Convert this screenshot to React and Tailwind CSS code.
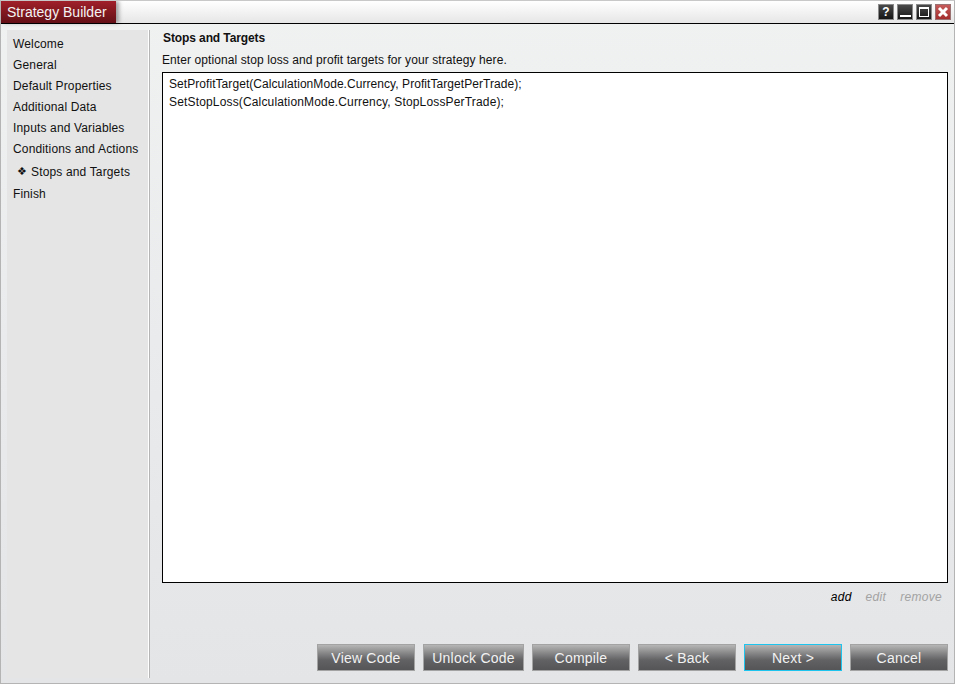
import React from "react";

const NAV = [
  { label: "Welcome", h: "h-[21px]" },
  { label: "General", h: "h-[21px]" },
  { label: "Default Properties", h: "h-[21px]" },
  { label: "Additional Data", h: "h-[21px]" },
  { label: "Inputs and Variables", h: "h-[21px]" },
  { label: "Conditions and Actions", h: "h-[22px]" },
  { label: "Stops and Targets", h: "h-[23px]", active: true },
  { label: "Finish", h: "h-[21px]" },
];

const WinButton = ({ children, className = "" }) => (
  <div
    className={`w-[16px] h-[16px] border border-[#8a8a8a] flex items-center justify-center ${className}`}
  >
    {children}
  </div>
);

const ActionButton = ({ label, width = "w-[98px]", focused }) => (
  <button
    type="button"
    className={`${width} h-[27px] border bg-gradient-to-b from-[#b6b6b6] via-[#626264] via-[60%] to-[#555557] text-[14px] tracking-[0.2px] text-[#f2f2f2] flex items-center justify-center pt-[2px] ${
      focused ? "border-[#1cc4ee]" : "border-[#a3a3a3]"
    }`}
  >
    {label}
  </button>
);

export default function App() {
  return (
    <div className="w-[955px] h-[684px] flex flex-col border border-[#b4b4b4] border-t-[#c8c8c8] bg-gradient-to-b from-[#f0f1f1] to-[#e4e5e7] font-['Liberation_Sans',Arial,sans-serif] text-[12px] text-[#111] overflow-hidden">
      {/* title bar */}
      <div className="h-[23px] shrink-0 flex items-stretch border-b border-black bg-gradient-to-b from-white to-[#e6e6e6]">
        <div className="w-[115px] bg-gradient-to-b from-[#a0202a] to-[#641016] text-[#f3f3f3] text-[14px] leading-[22px] pl-[6px] shadow-[3px_0_4px_rgba(0,0,0,0.35)]">
          Strategy Builder
        </div>
        <div className="flex-1 flex items-center justify-end gap-[3px] pr-[3px]">
          <WinButton className="bg-gradient-to-b from-[#4a4a4a] to-[#161616]">
            <span className="text-white font-bold text-[12px] leading-none">?</span>
          </WinButton>
          <WinButton className="bg-gradient-to-b from-[#4a4a4a] to-[#161616] items-end pb-[2px]">
            <div className="w-[11px] h-[2px] bg-white" />
          </WinButton>
          <WinButton className="bg-gradient-to-b from-[#4a4a4a] to-[#161616]">
            <div className="w-[10px] h-[10px] border border-white border-t-2" />
          </WinButton>
          <WinButton className="bg-gradient-to-b from-[#c55a5a] to-[#a32c2c] border-[#9a7070]">
            <svg width="12" height="12" viewBox="0 0 12 12">
              <path d="M2 2 L10 10 M10 2 L2 10" stroke="#fff" strokeWidth="3" />
            </svg>
          </WinButton>
        </div>
      </div>

      <div className="flex-1 flex min-h-0 pl-[6px] pt-[6px] pb-[5px]">
        {/* step list */}
        <div className="w-[141px] shrink-0 bg-[#e5e5e5] pt-[3px] pl-[6px] tracking-[0.15px]">
          {NAV.map((item) => (
            <div key={item.label} className={`${item.h} flex items-center`}>
              {item.active && (
                <span className="w-[18px] pl-[4px] text-[11px] leading-none">❖</span>
              )}
              <span>{item.label}</span>
            </div>
          ))}
        </div>
        <div className="w-[2px] shrink-0 bg-[#b5b5b5] border-l border-white" />

        {/* main */}
        <div className="flex-1 flex flex-col min-w-0 pl-[12px] pr-[6px]">
          <div className="font-bold h-[17px] -mt-[1px] pl-[1px] flex items-center tracking-[-0.1px]">Stops and Targets</div>
          <div className="mt-[5px] h-[17px] flex items-center tracking-[0.09px]">
            Enter optional stop loss and profit targets for your strategy here.
          </div>
          <div className="mt-[4px] h-[511px] border border-black bg-white pt-[2px] pl-[6px]">
            <div className="h-[18px] flex items-center tracking-[0.06px]">
              SetProfitTarget(CalculationMode.Currency, ProfitTargetPerTrade);
            </div>
            <div className="h-[18px] flex items-center tracking-[0.16px]">
              SetStopLoss(CalculationMode.Currency, StopLossPerTrade);
            </div>
          </div>
          <div className="mt-[6px] flex justify-end gap-[14px] pr-[6px] italic text-[12px] tracking-[0.3px] h-[16px] items-center">
            <span className="text-black">add</span>
            <span className="text-[#a3a3a3]">edit</span>
            <span className="text-[#a3a3a3]">remove</span>
          </div>
          <div className="mt-auto flex justify-end gap-[8px] mb-[7px]">
            <ActionButton label="View Code" />
            <ActionButton label="Unlock Code" width="w-[101px]" />
            <ActionButton label="Compile" />
            <ActionButton label="< Back" />
            <ActionButton label="Next >" focused />
            <ActionButton label="Cancel" />
          </div>
        </div>
      </div>
    </div>
  );
}
